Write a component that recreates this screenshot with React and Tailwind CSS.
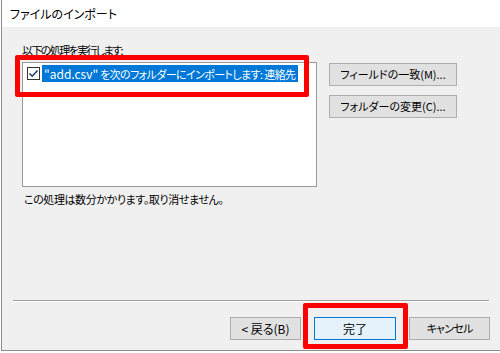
import React from 'react';

const font = { fontFamily: '"Noto Sans CJK JP", "Noto Sans", sans-serif', fontFeatureSettings: '"palt"' };

function WinButton({ children, primary, className = '' }) {
  return (
    <button
      className={
        'h-[23px] flex items-center justify-center text-[11px] text-[#000] border ' +
        (primary ? 'bg-[#e5f1fb] border-[#0078d7] ' : 'bg-[#e1e1e1] border-[#adadad] ') +
        className
      }
    >
      {children}
    </button>
  );
}

export default function App() {
  return (
    <div className="w-[500px] h-[353px] bg-white relative overflow-hidden" style={font}>
      <div className="ml-[1px] h-[351px] flex flex-col border-l border-b border-[#8c8c8c]">
        {/* title bar */}
        <div className="h-[27px] bg-white flex items-center pl-[8px] text-[12px] text-[#000]">
          ファイルのインポート
        </div>

        {/* body */}
        <div className="flex-1 bg-[#f0f0f0] flex flex-col">
          <div className="pl-[20px] pt-[16px] text-[11px] leading-[14px] tracking-[-1.6px] text-[#000]">以下の処理を実行します:</div>

          <div className="flex pl-[20px] pt-[5px]">
            <div className="w-[295px] h-[125px] bg-white border border-[#9a9a9a] pt-[2px] pl-[4px]">
              <div className="flex items-center h-[17px]">
                <div className="w-[13px] h-[13px] bg-white border border-[#333] flex items-center justify-center">
                  <svg width="11" height="11" viewBox="0 0 11 11">
                    <path d="M1.5 5.5 L4.2 8.2 L9.5 2.5" fill="none" stroke="#1e3a6e" strokeWidth="1.6" />
                  </svg>
                </div>
                <div className="ml-[2px] h-[17px] bg-[#0078d7] text-white text-[11px] leading-[17px] pl-[2px] pr-[3px] whitespace-nowrap">
                  <span className="text-[12px]">"add.csv"</span>
                  <span className="tracking-[-0.6px]"> を次のフォルダーにインポートします: 連絡先</span>
                </div>
              </div>
            </div>

            <div className="ml-[12px] pt-[1px] flex flex-col gap-[9px]">
              <WinButton className="w-[128px]">フィールドの一致(M)...</WinButton>
              <WinButton className="w-[128px]">フォルダーの変更(C)...</WinButton>
            </div>
          </div>

          <div className="pl-[22px] pt-[5px] text-[11px] leading-[14px] tracking-[-0.4px] text-[#000]">
            この処理は数分かかります。取り消せません。
          </div>

          <div className="flex-1" />

          <div className="mx-[11px] h-[2px] border-t border-[#a0a0a0] border-b border-b-white" />

          <div className="flex justify-end gap-[13px] pr-[10px] pt-[15px] pb-[10px]">
            <WinButton className="w-[71px] text-[12px]">&lt; 戻る(B)</WinButton>
            <WinButton primary className="w-[82px]">
              <span className="text-[12px]">完了</span>
            </WinButton>
            <WinButton className="w-[81px] tracking-[-0.8px]">キャンセル</WinButton>
          </div>
        </div>
      </div>

      {/* red annotation boxes */}
      <div className="absolute left-[15px] top-[55px] w-[294px] h-[42px] border-[5px] border-[#ff0000] rounded-[2px]" />
      <div className="absolute left-[303px] top-[303px] w-[105px] h-[46px] border-[5px] border-[#ff0000] rounded-[2px]" />
    </div>
  );
}
